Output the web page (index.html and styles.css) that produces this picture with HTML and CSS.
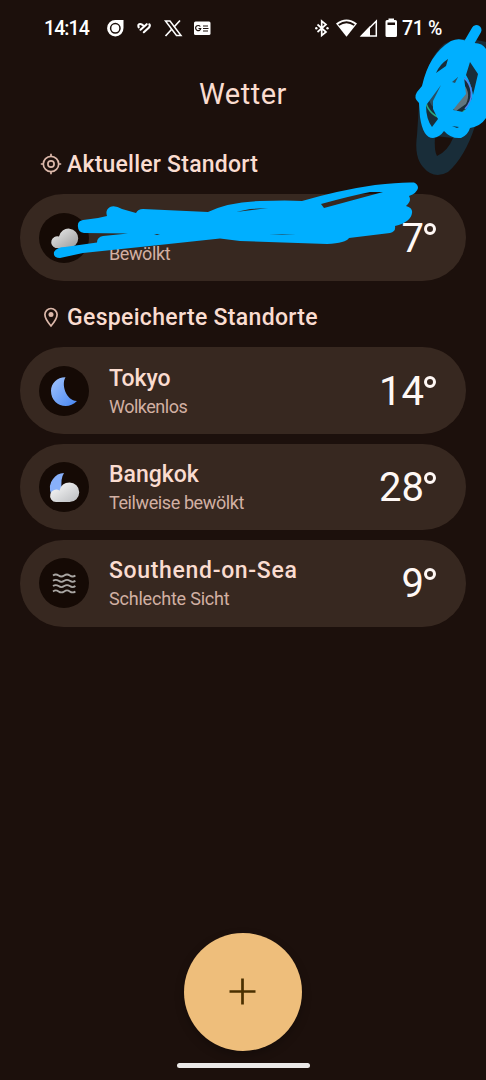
FILE: index.html
```html
<!DOCTYPE html>
<html lang="de">
<head>
	<meta charset="utf-8" />
	<title>Wetter</title>
	<link rel="stylesheet" href="styles.css">
</head>
<body>
<div class="screen">
	<header class="status">
		<span class="clock">14:14</span>
		<svg class="notifications" width="106" height="20" viewBox="106 18 106 20">
			<path d="M115.500 20H123.500V28A8.200 8.200 0 1 1 115.500 20Z" fill="#fff"/>
			<circle cx="115.300" cy="28.300" r="4.700" fill="#fff" stroke="#1c100c" stroke-width="1.500"/>
			<g fill="none" stroke="#fff" stroke-width="2.100" stroke-linecap="round">
				<path d="M138.700 27.300Q137.500 24.300 140 24Q141.500 23.800 143.800 26"/>
				<path d="M140.500 29.700L146.700 24.200"/>
				<path d="M143.800 32.200L149 27.500Q150.500 25.500 149.300 24.300"/>
			</g>
			<path d="M165.500 21H170L181 35.500H176.500Z" fill="none" stroke="#fff" stroke-width="1.500"/>
			<path d="M180 20.500L174 27M171.500 29.500L165.500 36" stroke="#fff" stroke-width="1.700"/>
			<rect x="194" y="21.500" width="16.500" height="13.500" rx="1.500" fill="#fff"/>
			<path d="M200.300 26.500A2.600 2.600 0 1 0 200.800 28.500H198.500M203 26H208M203 28.500H208.500M203 31H208" fill="none" stroke="#1c100c" stroke-width="1.200"/>
		</svg>
		<svg class="system" width="84" height="22" viewBox="314 17 84 22">
			<path d="M317.500 24.500L326 32L321.700 35.500V21L326 24.500L317.500 32" fill="none" stroke="#fff" stroke-width="1.700"/>
			<circle cx="316.300" cy="28.300" r="1.200" fill="#fff"/>
			<circle cx="327.500" cy="28.300" r="1.200" fill="#fff"/>
			<path d="M336 23.500Q346.500 15.500 357 23.500L346.500 36.700Z" fill="#fff"/>
			<path d="M338.700 25Q346.500 19.500 354.300 25" fill="none" stroke="#1c100c" stroke-width="1.800"/>
			<path d="M376.300 21V36H361.500Z" fill="none" stroke="#fff" stroke-width="1.500"/>
			<path d="M370 26V36H360.500Z" fill="#fff"/>
			<path d="M388.500 18.500H394V20H395.500Q397 20 397 21.500V35.500Q397 37 395.500 37H387Q385.500 37 385.500 35.500V21.500Q385.500 20 387 20H388.500Z" fill="#fff"/>
			<path d="M387.500 22.500H395V25H387.500Z" fill="#1c100c"/>
		</svg>
		<span class="percent">71 %</span>
	</header>

	<h1>Wetter</h1>

	<main>
		<h2>
			<svg width="22" height="22" viewBox="0 0 22 22" fill="none" stroke="#dcb8aa" stroke-width="1.700">
				<circle cx="11" cy="11" r="7.700"/>
				<circle cx="11" cy="11" r="3.100"/>
				<path d="M11 .8V4M11 18V21.200M.8 11H4M18 11H21.200"/>
			</svg>
			<span class="current">Aktueller Standort</span>
		</h2>
		<section class="card">
			<svg class="icon" viewBox="0 0 50 50">
				<defs>
					<linearGradient id="cloud" x1="0" y1="0" x2="1" y2="1">
						<stop offset="0" stop-color="#fff"/>
						<stop offset="1" stop-color="#b8babd"/>
					</linearGradient>
					<linearGradient id="greyCloud" x1="0" y1="0" x2="1" y2="1">
						<stop offset="0" stop-color="#eee"/>
						<stop offset="1" stop-color="#999"/>
					</linearGradient>
					<linearGradient id="moon" x1="0" y1="0" x2="1" y2="1">
						<stop offset="0" stop-color="#a3c4fc"/>
						<stop offset="1" stop-color="#4686f2"/>
					</linearGradient>
				</defs>
				<path d="M16.500 35A5.800 5.800 0 1 1 20 23.500A9.700 9.700 0 1 1 30 35Z" fill="url(#greyCloud)"/>
			</svg>
			<div class="place">
				<h3>&nbsp;</h3>
				<p class="cloudy">Bewölkt</p>
			</div>
			<span class="temp">7<i></i></span>
		</section>

		<h2>
			<svg width="22" height="22" viewBox="0 0 22 22" fill="none" stroke="#dcb8aa" stroke-width="1.700">
				<path d="M11 20Q4.900 13 4.900 8.600A6.100 6.100 0 0 1 17.100 8.600Q17.100 13 11 20Z"/>
				<circle cx="11" cy="8.600" r="2.500" fill="#dcb8aa" stroke="none"/>
			</svg>
			<span class="saved">Gespeicherte Standorte</span>
		</h2>
		<section class="card">
			<svg class="icon" viewBox="0 0 50 50">
				<path d="M26.500 11.200C22 18.500 27 34.500 38 35C28 45.500 12 38.500 12 25C12 17 18.500 11 26.500 11.200Z" fill="url(#moon)"/>
			</svg>
			<div class="place">
				<h3>Tokyo</h3>
				<p class="clear">Wolkenlos</p>
			</div>
			<span class="temp">14<i></i></span>
		</section>
		<section class="card">
			<svg class="icon" viewBox="0 0 50 50">
				<path d="M25 11Q21 17 23 28L12 32Q9 23 14 17Q18 11 25 11Z" fill="#88b0fa"/>
				<path d="M17 40A6.200 6.200 0 1 1 20.500 28.500Q22.500 20.500 30.500 20.500A9.700 9.700 0 0 1 30.500 40Z" fill="url(#cloud)"/>
			</svg>
			<div class="place">
				<h3>Bangkok</h3>
				<p class="partly">Teilweise bewölkt</p>
			</div>
			<span class="temp">28<i></i></span>
		</section>
		<section class="card">
			<svg class="icon" viewBox="0 0 50 50" fill="none" stroke="#a9a6a3" stroke-width="1.800">
				<path d="M14 17.500q2.800-2 5.600 0t5.600 0t5.600 0t5.600 0M14 22.800q2.800-2 5.600 0t5.600 0t5.600 0t5.600 0M14 28.100q2.800-2 5.600 0t5.600 0t5.600 0t5.600 0M14 33.400q2.800-2 5.600 0t5.600 0t5.600 0t5.600 0"/>
			</svg>
			<div class="place">
				<h3 class="southend">Southend-on-Sea</h3>
				<p class="fog">Schlechte Sicht</p>
			</div>
			<span class="temp">9<i></i></span>
		</section>
	</main>

	<footer>
		<button class="add" aria-label="Hinzufügen">
			<svg width="28" height="28" viewBox="0 0 28 28"><path d="M13.500 .5V26.500M.5 13.500H26.500" stroke="#4a3000" stroke-width="2.700"/></svg>
		</button>
		<div class="homebar"></div>
	</footer>

	<!-- marker strokes over the account picture and the place name -->
	<svg class="marker" width="486" height="280" viewBox="0 0 486 280">
		<path fill="#192d39" fill-rule="evenodd" d="M486 42Q460 35 444 44Q425 60 419 105L417 135Q414 157 423 167Q434 180 448 172Q465 157 475 126L486 118ZM435 136L453 138Q448 151 437 156Q434 151 435 136Z"/>
		<circle cx="447" cy="94" r="19" fill="#285064"/>
		<path d="M461 82Q472 91 466 104L456 111L451 107L461 95Z" fill="#60757e"/>
		<path d="M463 77A21 21 0 0 1 465 109" fill="none" stroke="#5482ee" stroke-width="1.700"/>
		<path d="M465 110A22 22 0 0 1 426 103" fill="none" stroke="#28aa83" stroke-width="1.500"/>
		<path d="M476.500 30L466 48" stroke="#00afff" stroke-width="10" stroke-linecap="round"/>
		<path fill="#00afff" fill-rule="evenodd" d="M468 42Q460 37 451 41Q429 54 422 86L417 92Q413 98 419 103L420 117Q423 138 433 138Q440 137 444 131Q451 139 461 138Q468 135 470 128Q481 126 486 118V49Q482 42 472 43Z
			M436 73Q440 64 448 59L446 66Z
			M470 62L478 74L473 95Q471 83 466 75Z
			M464 77Q473 84 472 98Q468 108 463 112L453 110Q460 101 466 94Z
			M452 82L458 77L455 83Z
			M427 104L441 85L433 101L433 109L438 119L432 127Q426 119 426 105Z
			M452 126L459 127L457 128Z"/>
		<path fill="#00afff" fill-rule="evenodd" d="M78 227Q77 221 83 220L98 218L107 216Q105 210 110 207Q115 205 122 209L136 213Q138 209 143 209L208 212Q228 202 260 201Q288 200 302 201Q340 190 375 185Q400 182 414 182.500Q418 184 418 188Q417 193 409 196Q412 201 406 206Q413 208 412 213Q411 222 395 226Q396 232 390 233L349 238Q346 243 327 244L240 241L220 238.500L150 246L83 253L60 258Q53 258 54 252Q57 247 65 247L97 242.500Q97 237 103 236L128 233.500L84 233Q78 232 78 227Z
			M236 212L250 209L268 208Z
			M321 204Q350 196 370 192L383 192L324 208Z
			M154 235L157 234L160 235Z
			M269 234L282 234L296 235Z"/>
	</svg>
</div>
</body>
</html>
```

FILE: styles.css
```css
*{
	box-sizing: border-box;
}

body{
	margin: 0;
	background: #1c100c;
	color: #fadcd0;
	font-family: Roboto, "Liberation Sans", sans-serif;
}

.screen{
	position: relative;
	display: flex;
	flex-direction: column;
	width: 486px;
	height: 1080px;
	overflow: hidden;
}

.status{
	display: flex;
	align-items: center;
	height: 56px;
	padding-left: 44px;
	color: #fff;
	font-size: 19.5px;
	font-weight: 500;
}

.clock{
	width: 62px;
	letter-spacing: -.9px;
}

.notifications{
	margin-right: 102px;
}

.system{
	margin-right: 4px;
}

.percent{
	letter-spacing: -.3px;
	white-space: nowrap;
}

h1{
	margin: 0;
	height: 76px;
	line-height: 77px;
	text-align: center;
	font-size: 29px;
	font-weight: 400;
	letter-spacing: .5px;
}

main{
	flex: 1;
	padding: 9px 20px 0;
}

h2{
	display: flex;
	align-items: center;
	gap: 5px;
	height: 45px;
	margin: 0 0 8.300px;
	padding-left: 20px;
	font-size: 23px;
	font-weight: 500;
	white-space: nowrap;
}

h2 span{
	padding-top: 1px;
}

.current{
	letter-spacing: .22px;
}

.saved{
	letter-spacing: .32px;
}

.card{
	display: flex;
	align-items: center;
	height: 86.600px;
	margin-bottom: 9.7px;
	padding: 0 30px 0 19px;
	border-radius: 44px;
	background: #372820;
}

.card + h2{
	margin-top: 13.200px;
}

.icon{
	width: 50px;
	height: 50px;
	border-radius: 50%;
	background: #150a05;
}

.place{
	flex: 1;
	padding: 4px 0 0 20px;
	white-space: nowrap;
}

h3{
	margin: 0;
	font-size: 23px;
	font-weight: 500;
	line-height: 28px;
}

.southend{
	letter-spacing: .67px;
}

.place p{
	margin: 0;
	color: #d2b0a3;
	font-size: 18px;
	line-height: 28px;
}

.cloudy,
.partly{
	letter-spacing: -.4px;
}

.clear{
	letter-spacing: -.5px;
}

.fog{
	letter-spacing: -.2px;
}

.temp{
	display: flex;
	padding-top: 2px;
	color: #fff8f5;
	font-size: 40px;
	line-height: 48px;
}

/* degree ring */
.temp i{
	width: 12px;
	height: 12px;
	margin-top: 8px;
	border: 3px solid #fff8f5;
	border-radius: 50%;
}

footer{
	display: flex;
	flex-direction: column;
	align-items: center;
	gap: 12px;
	height: 147.500px;
}

.add{
	display: flex;
	align-items: center;
	justify-content: center;
	width: 118px;
	height: 118px;
	padding: 0;
	border: 0;
	border-radius: 50%;
	background: #eebe7b;
	box-shadow: 0 4px 10px rgba(0, 0, 0, .25);
}

.homebar{
	width: 133px;
	height: 5px;
	border-radius: 3px;
	background: #ebe9e8;
}

.marker{
	position: absolute;
	top: 0;
	left: 0;
}
```
